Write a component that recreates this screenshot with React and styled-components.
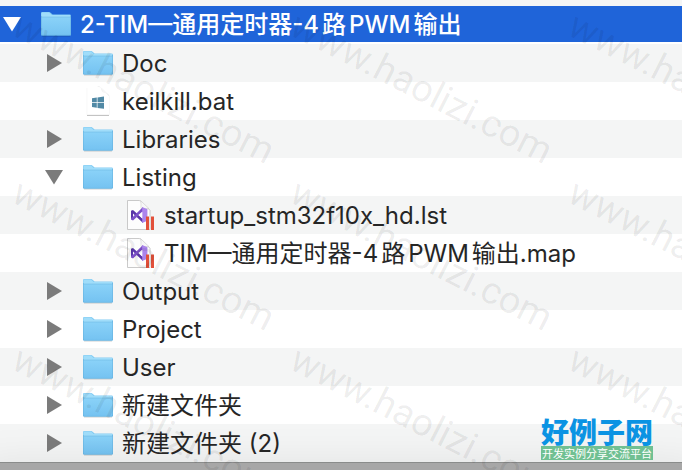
import React, { useState } from "react";
import styled, { createGlobalStyle } from "styled-components";

const files = [
    { name: "Doc", type: "folder" },
    { name: "keilkill.bat", type: "bat" },
    { name: "Libraries", type: "folder" },
    {
        name: "Listing",
        type: "folder",
        children: [
            { name: "startup_stm32f10x_hd.lst", type: "source" },
            { name: "TIM—通用定时器-4路PWM输出.map", type: "source" },
        ],
    },
    { name: "Output", type: "folder" },
    { name: "Project", type: "folder" },
    { name: "User", type: "folder" },
    { name: "新建文件夹", type: "folder" },
    { name: "新建文件夹 (2)", type: "folder" },
];

const root = { name: "2-TIM—通用定时器-4路PWM输出", type: "folder", children: files };

const flatten = (node, open, depth = 0) => {
    const rows = [{ ...node, depth }];
    if (node.children && open[node.name]) {
        node.children.forEach((child) => rows.push(...flatten(child, open, depth + 1)));
    }
    return rows;
};

const FolderIcon = () => (
    <svg width="30" height="26" viewBox="0 0 30 26" aria-hidden="true">
        <defs>
            <linearGradient id="folder" x1="0" y1="0" x2="0" y2="1">
                <stop offset="0" stopColor="#8ad2f8" />
                <stop offset="1" stopColor="#74c2f1" />
            </linearGradient>
        </defs>
        <path d="M0 2.2Q0 1 1.2 1H8.2Q9 1 9.6 1.7L11.6 3.6H28.6Q30 3.6 30 5V24H0Z" fill="#82cbf3" />
        <path d="M0.5 6V2.4Q0.5 1.4 1.4 1.4H8L10.6 4H29V6Z" fill="#a0ddfa" />
        <path d="M0 6.2H30V23.4Q30 24.6 28.8 24.6H1.2Q0 24.6 0 23.4Z" fill="url(#folder)" />
        <path d="M0 6H30" stroke="#74bde8" strokeWidth="0.6" />
        <path d="M0.3 5V23.2Q0.3 24.4 1.6 24.4H28.4Q29.7 24.4 29.7 23.2V5" fill="none" stroke="#62aedb" strokeWidth="0.6" />
        <path d="M1 25.3H29" stroke="#000" strokeOpacity="0.15" strokeWidth="0.8" />
    </svg>
);

const BatIcon = () => (
    <svg width="30" height="32" viewBox="0 0 30 32" aria-hidden="true">
        <path d="M4 1H17L27 11V30H4Z" fill="#fff" />
        <path d="M14 1Q19 2 19 7Q25 7 27 12L16 1Z" fill="#e6e6e6" />
        <path d="M19 7Q20 3 17 1L25 9Z" fill="#f6f6f6" />
        <path d="M4 30.4H26" stroke="#b4b4b4" strokeWidth="0.9" />
        <path d="M4 3V30M26.5 12V30" stroke="#f3f3f3" strokeWidth="0.6" />
        <path d="M9 13.2L13.8 12.5V17.3H9ZM14.5 12.4L21 11.5V17.3H14.5ZM9 18H13.8V22.8L9 22.1ZM14.5 18H21V23.8L14.5 22.9Z" fill="#5189a5" />
    </svg>
);

const SourceIcon = () => (
    <svg width="30" height="32" viewBox="0 0 30 32" aria-hidden="true">
        <path d="M2.5 1.5H15.5L25 11V30.5H2.5Z" fill="#fdfdfd" stroke="#bdbdbd" strokeWidth="0.8" />
        <path d="M14 1.5Q17 4 17 9Q22 9 25 12V11L15.5 1.5Z" fill="#e2e2e2" />
        <path d="M16 2V9.5H24Z" fill="#f7f7f7" stroke="#c9c9c9" strokeWidth="0.5" />
        <path d="M6 11.8L8 11L18 20V24L8 14.4V19L6 20.6Z" fill="#5a35a8" />
        <path d="M6 20.6L8 21.4L18 12.4V8L8 17.8L6 19Z" fill="#7b50c8" />
        <path d="M17.2 8L22.4 10.2V21.8L17.2 24Z" fill="#ab84ec" />
        <path d="M17.2 12.8V19.4L13.4 16.1Z" fill="#fdfdfd" />
        <path d="M21 17.5H24V31H21ZM26 17.5H29V31H26Z" fill="#e2503a" />
    </svg>
);

const icons = { folder: FolderIcon, bat: BatIcon, source: SourceIcon };

const App = () => {
    const [open, setOpen] = useState({ [root.name]: true, Listing: true });
    const [selected, setSelected] = useState(root.name);

    const toggle = (name) => setOpen({ ...open, [name]: !open[name] });

    return (
        <Window>
            <GlobalStyle />
            <TopEdge />
            <Tree>
                {flatten(root, open).map(({ name, type, depth }) => {
                    const Icon = icons[type];
                    return (
                        <Row
                            key={name}
                            $depth={depth}
                            $selected={selected === name}
                            onClick={() => setSelected(name)}
                        >
                            <ToggleSlot>
                                {type === "folder" && (
                                    <Toggle
                                        aria-label={name}
                                        aria-expanded={!!open[name]}
                                        $selected={selected === name}
                                        onClick={() => toggle(name)}
                                    >
                                        <svg width="18" height="18" viewBox="0 0 18 18" aria-hidden="true">
                                            <path d={open[name] ? "M0 2H18L9 16.5Z" : "M2 0V18L17 9Z"} />
                                        </svg>
                                    </Toggle>
                                )}
                            </ToggleSlot>
                            <IconSlot>
                                <Icon />
                            </IconSlot>
                            <Name $selected={selected === name}>{name}</Name>
                        </Row>
                    );
                })}
            </Tree>
            <BottomEdge />
            <Watermarks aria-hidden="true">
                {Array.from({ length: 9 }, (_, i) => (
                    <Mark key={i}>www.haolizi.com</Mark>
                ))}
            </Watermarks>
            <Logo>
                <LogoName>好例子网</LogoName>
                <LogoSlogan>开发实例分享交流平台</LogoSlogan>
            </Logo>
        </Window>
    );
};

export default App;

const GlobalStyle = createGlobalStyle`
    body {
        margin: 0;
        background: #fff;
        font-family: Inter, "Noto Sans CJK SC", sans-serif;
    }
`;

const Window = styled.div`
    position: relative;
    min-height: 100vh;
    display: flex;
    flex-direction: column;
    overflow: hidden;
`;

const TopEdge = styled.div`
    height: 6px;
    background: #f4f5f5;
`;

const Tree = styled.ul`
    margin: 0;
    padding: 0;
    list-style: none;
`;

const Row = styled.li`
    display: flex;
    align-items: center;
    height: 38px;
    box-sizing: border-box;
    padding-left: ${({ $depth }) => $depth * 42}px;
    color: ${({ $selected }) => ($selected ? "#fff" : "#262626")};
    background: ${({ $selected }) => ($selected ? "#1f64d9" : "#fff")};
    border-bottom: ${({ $selected }) => ($selected ? "2px solid #fff" : "none")};

    &:nth-child(even) {
        background: ${({ $selected }) => ($selected ? "#1f64d9" : "#f4f5f5")};
    }
`;

const ToggleSlot = styled.div`
    width: 24px;
    margin-right: 17px;
    display: flex;
    justify-content: center;
`;

const Toggle = styled.button`
    display: flex;
    padding: 0;
    border: none;
    background: none;
    color: ${({ $selected }) => ($selected ? "#fff" : "#7b7b7b")};

    svg {
        fill: currentColor;
    }
`;

const IconSlot = styled.div`
    width: 30px;
    margin-right: 9px;
    display: flex;
`;

const Name = styled.span`
    padding-top: 2px;
    font-size: 24px;
    font-weight: ${({ $selected }) => ($selected ? 500 : 400)};
    line-height: 36px;
    white-space: nowrap;
    text-autospace: normal;
`;

const BottomEdge = styled.div`
    position: relative;
    flex: 1;
    min-height: 8px;
    box-sizing: border-box;
    border-top: 1px solid #8a8c8b;
    background: #a7a7a7;
    box-shadow: 0 20px 40px 20px rgba(0, 0, 0, 0.08);
`;

const Watermarks = styled.div`
    position: absolute;
    inset: 0;
    overflow: hidden;
    pointer-events: none;
    display: grid;
    grid-template-columns: repeat(3, 278px);
    grid-auto-rows: 167px;
    padding: 1px 0 0 10px;
`;

const Mark = styled.span`
    font-family: Roboto, sans-serif;
    font-size: 38px;
    line-height: 40px;
    white-space: nowrap;
    color: rgba(0, 0, 0, 0.07);
    transform: rotate(27deg);
    transform-origin: 0 32px;
    height: 40px;
`;

const Logo = styled.div`
    position: absolute;
    right: 29px;
    bottom: 10px;
    display: flex;
    flex-direction: column;
    font-family: "Noto Sans CJK SC", sans-serif;
    text-align: center;
    white-space: nowrap;
`;

const LogoName = styled.strong`
    font-size: 28px;
    font-weight: 900;
    line-height: 30px;
    color: #0b93e3;
`;

const LogoSlogan = styled.span`
    font-size: 11px;
    line-height: 14px;
    color: #fff;
    background: #70c092;
`;
